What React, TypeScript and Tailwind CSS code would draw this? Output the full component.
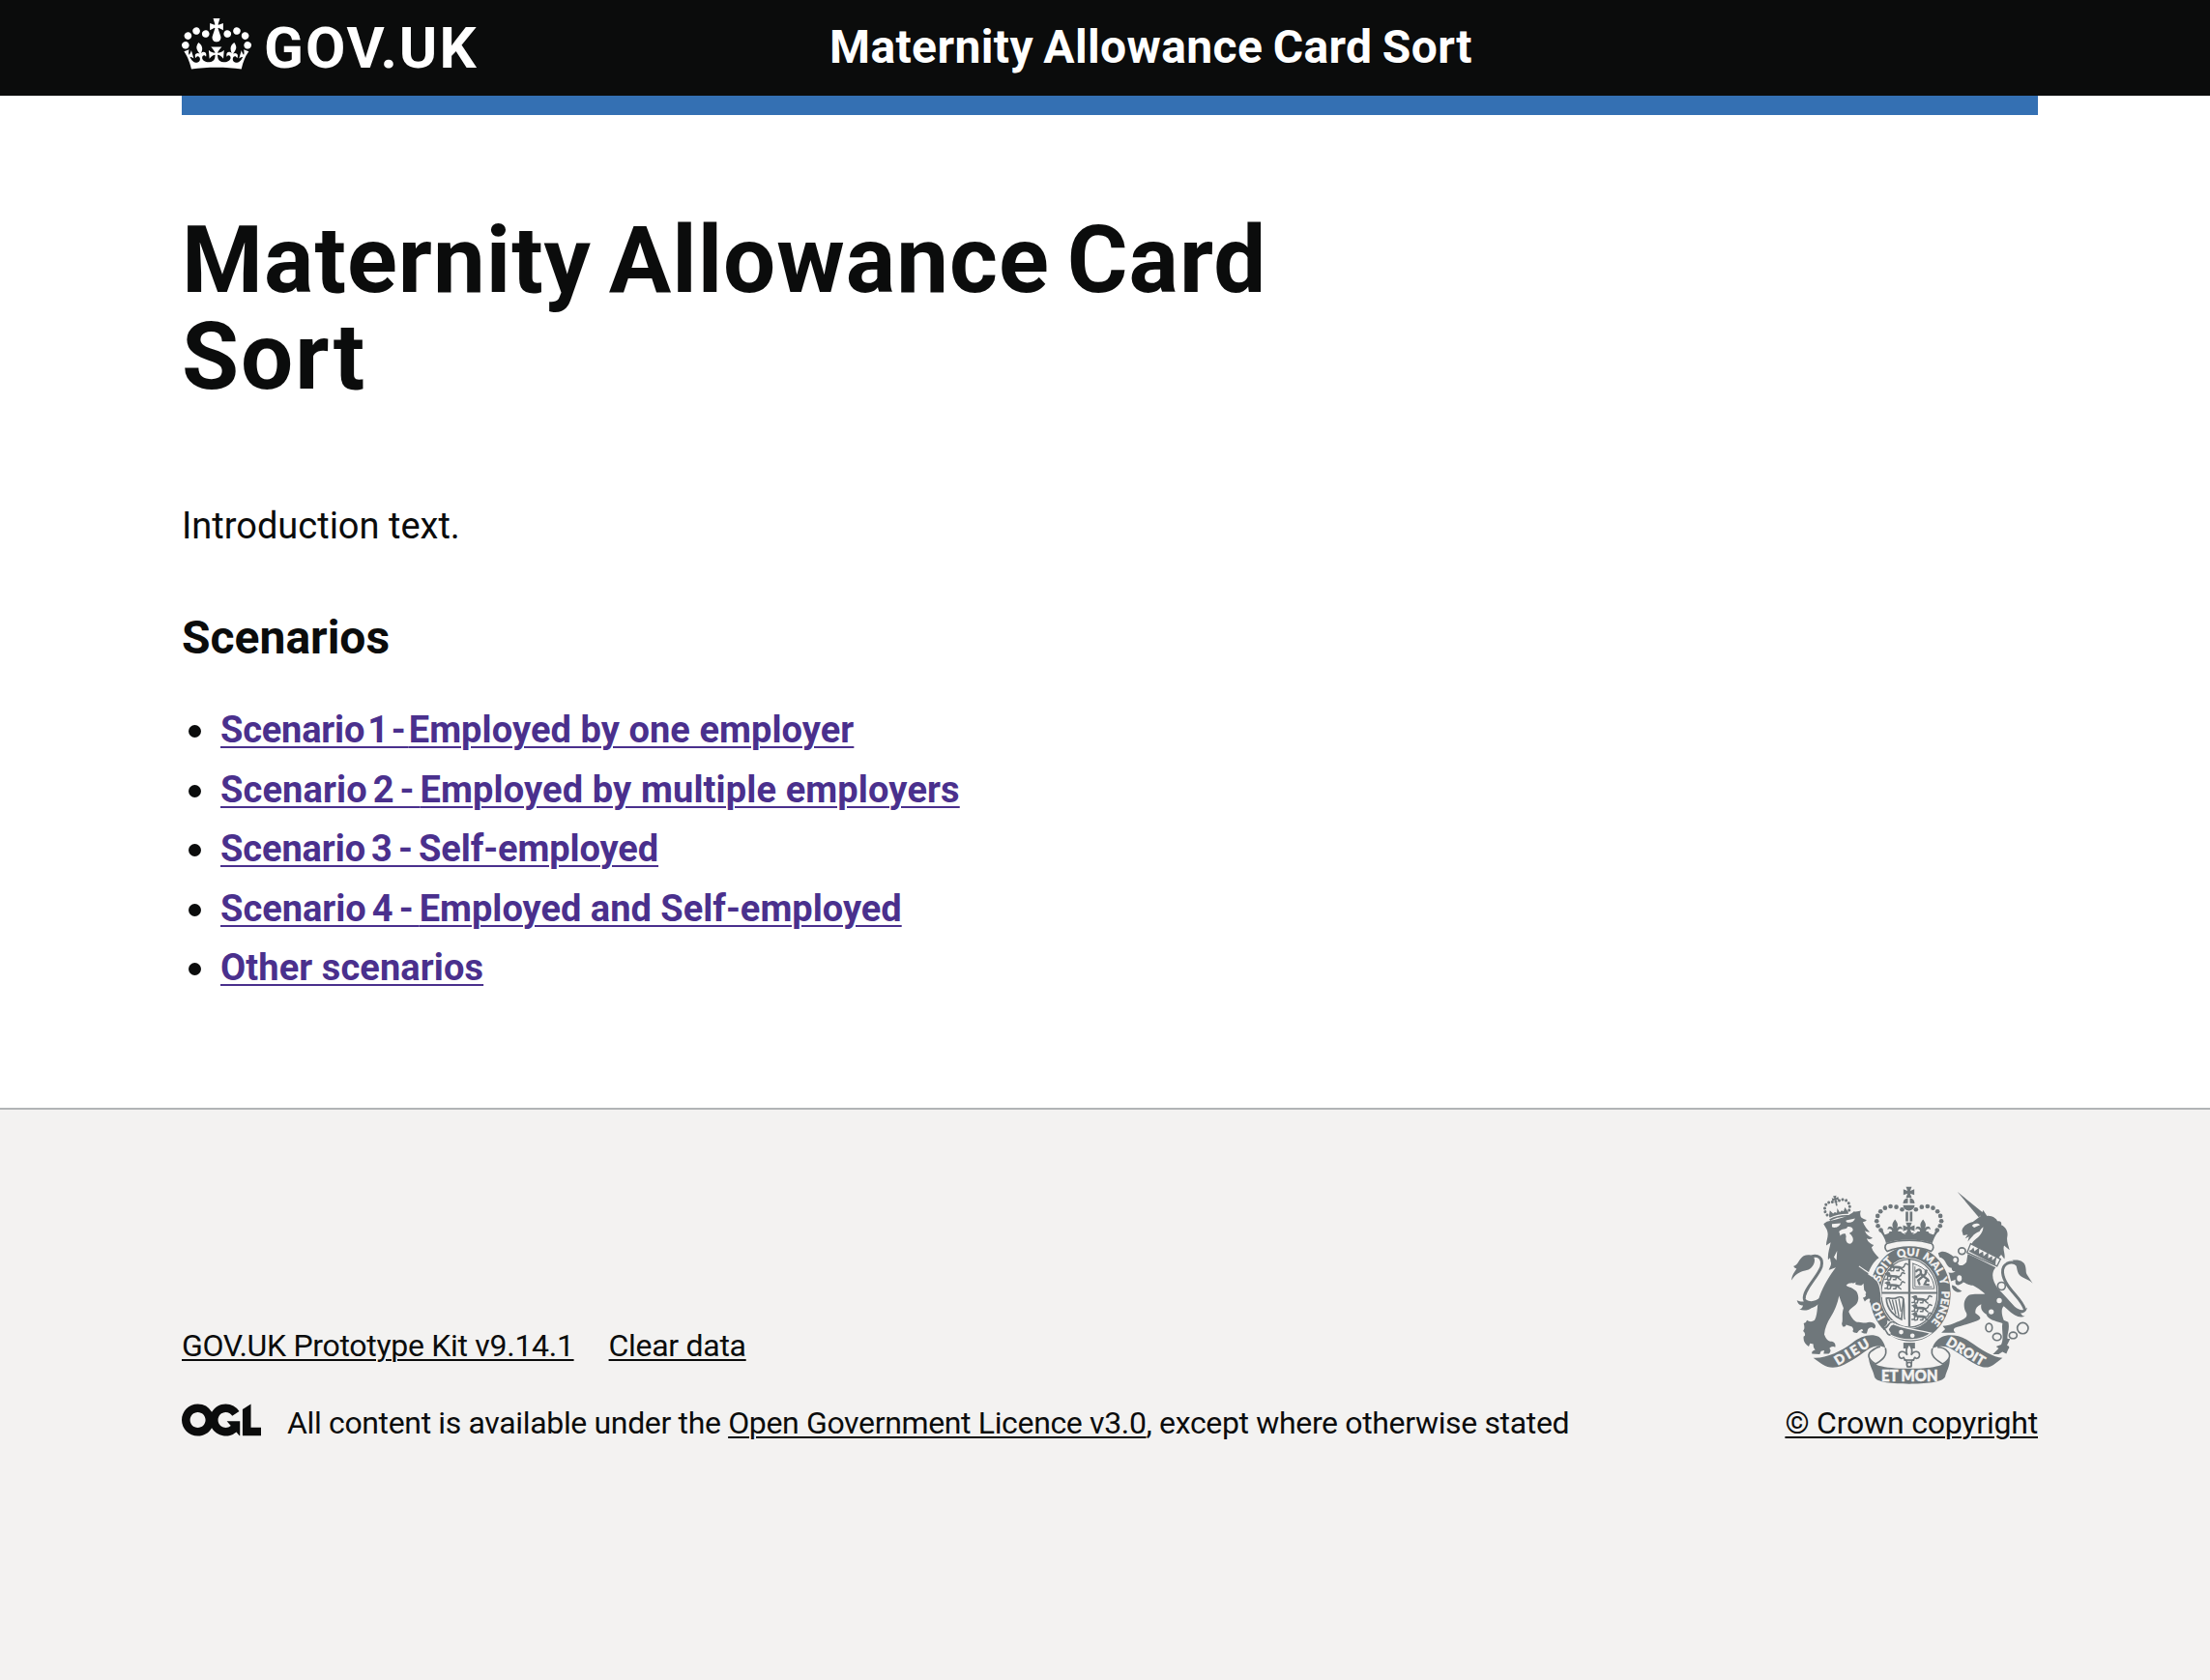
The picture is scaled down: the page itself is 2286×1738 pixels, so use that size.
import type { ReactNode } from "react";

const INK = "#6f777b";
const PAPER = "#f3f2f1";

function CrownLogo() {
  return (
    <svg viewBox="0 0 132 97" className="h-[53px] w-[72px]" fill="currentColor" fillRule="evenodd" aria-hidden="true">
      <path d="M25 30.2c3.5 1.5 7.7-.2 9.1-3.7 1.5-3.6-.2-7.8-3.9-9.2-3.6-1.4-7.6.3-9.1 3.9-1.4 3.5.3 7.5 3.9 9zM9 39.5c3.6 1.5 7.8-.2 9.2-3.7 1.5-3.6-.2-7.8-3.9-9.1-3.6-1.5-7.6.2-9.1 3.8-1.4 3.5.3 7.5 3.8 9zM4.4 57.2c3.5 1.5 7.7-.2 9.1-3.8 1.5-3.6-.2-7.7-3.9-9.1-3.5-1.5-7.6.3-9.1 3.8-1.4 3.5.3 7.6 3.9 9.1zm38.3-21.4c3.5 1.5 7.7-.2 9.1-3.8 1.5-3.6-.2-7.7-3.9-9.1-3.6-1.5-7.6.3-9.1 3.8-1.3 3.6.4 7.7 3.9 9.1zm64.4-5.6c-3.6 1.5-7.8-.2-9.1-3.7-1.5-3.6.2-7.8 3.8-9.2 3.6-1.4 7.7.3 9.2 3.9 1.3 3.5-.4 7.5-3.9 9zm15.9 9.3c-3.6 1.5-7.7-.2-9.1-3.7-1.5-3.6.2-7.8 3.7-9.1 3.6-1.5 7.7.2 9.2 3.8 1.5 3.5-.3 7.5-3.8 9zm4.7 17.7c-3.6 1.5-7.8-.2-9.2-3.8-1.5-3.6.2-7.7 3.9-9.1 3.6-1.5 7.7.3 9.2 3.8 1.3 3.5-.4 7.6-3.9 9.1zM89.3 35.8c-3.6 1.5-7.8-.2-9.2-3.8-1.4-3.6.2-7.7 3.9-9.1 3.6-1.5 7.7.3 9.2 3.8 1.4 3.6-.3 7.7-3.9 9.1zM69.7 17.7l8.9 4.7V9.3l-8.9 2.8c-.2-.3-.5-.6-.9-.9L72.4 0H59.6l3.5 11.2c-.3.3-.6.5-.9.9l-8.8-2.8v13.1l8.8-4.7c.3.3.6.7.9.9l-5 15.4v.1c-.2.8-.4 1.6-.4 2.4 0 4.1 3.1 7.5 7 8.1h.2c.3 0 .7.1 1 .1.4 0 .7 0 1-.1h.2c4-.6 7.1-4.1 7.1-8.1 0-.8-.1-1.7-.4-2.4V34l-5.1-15.4c.4-.2.7-.6 1-.9zM66 92.8c16.9 0 32.8 1.1 47.1 3.2 4-16.9 8.9-26.7 14-33.5l-9.6-3.4c1 4.9 1.1 7.2 0 10.2-1.5-1.4-3-4.3-4.2-8.7L108.6 76c2.8-2 5-3.2 7.5-3.3-4.4 9.4-10 11.9-13.6 11.2-4.3-.8-6.3-4.6-5.6-7.9 1-4.7 5.7-5.9 8-.5 4.3-8.7-3-11.4-7.6-8.8 7.1-7.2 7.9-13.5 2.1-21.1-8 6.1-8.1 12.3-4.5 20.8-4.7-5.4-12.1-2.5-9.5 6.2 3.4-5.2 7.9-2 7.2 3.1-.6 4.3-6.4 7.8-13.5 7.2-10.3-.9-10.9-8-11.2-13.8 2.5-.5 7.1 1.8 11 7.3L80.2 60c-4.1 4.4-8 5.3-12.3 5.4 1.4-4.4 8-11.6 8-11.6H55.5s6.4 7.2 7.9 11.6c-4.2-.1-8-1-12.3-5.4l1.4 16.4c3.9-5.5 8.5-7.7 10.9-7.3-.3 5.8-.9 12.8-11.1 13.8-7.2.6-12.9-2.9-13.5-7.2-.7-5 3.8-8.3 7.1-3.1 2.7-8.7-4.6-11.6-9.4-6.2 3.7-8.5 3.6-14.7-4.6-20.8-5.8 7.6-5 13.9 2.2 21.1-4.7-2.6-11.9.1-7.7 8.8 2.3-5.5 7.1-4.2 8.1.5.7 3.3-1.3 7.1-5.7 7.9-3.5.7-9-1.8-13.5-11.2 2.5.1 4.7 1.3 7.5 3.3l-4.7-15.4c-1.2 4.4-2.7 7.2-4.3 8.7-1.1-3-.9-5.3 0-10.2l-9.5 3.4c5 6.9 9.9 16.7 14 33.5 14.8-2.1 30.8-3.2 47.7-3.2z" />
    </svg>
  );
}

function OglLogo() {
  return (
    <svg viewBox="0 0 483.2 195.7" className="h-[34px] w-[82px]" fill="currentColor" role="img" aria-label="OGL">
      <path d="M421.5 142.8V.1l-50.7 32.3v161.1h112.4v-50.7zm-122.3-9.6A47.12 47.12 0 0 1 221 97.8c0-26 21.1-47.1 47.1-47.1 16.7 0 31.4 8.7 39.7 21.8l42.7-27.2A97.63 97.63 0 0 0 268.1 0c-36.5 0-68.3 20.1-85.1 49.7A98 98 0 0 0 97.8 0C43.9 0 0 43.9 0 97.8s43.9 97.8 97.8 97.8c36.5 0 68.3-20.1 85.1-49.7a97.76 97.76 0 0 0 149.6 25.4l19.4 22.2h3v-87.8h-80l24.3 27.5zM97.8 145c-26 0-47.1-21.1-47.1-47.1s21.1-47.1 47.1-47.1 47.1 21.1 47.1 47.1S123.8 145 97.8 145" />
    </svg>
  );
}

function Cross({ x, y, s = 1 }: { x: number; y: number; s?: number }) {
  return (
    <path
      transform={`translate(${x} ${y}) scale(${s})`}
      d="M-9-17H9L4-4 17-9V9L4 4 9 17H-9L-4 4-17 9V-9L-4-4z"
    />
  );
}

function Fleur({ x, y, s = 1 }: { x: number; y: number; s?: number }) {
  return (
    <path
      transform={`translate(${x} ${y}) scale(${s})`}
      d="M0-26C10-14 10-6 5 2 12-8 24-6 23 6 19 1 12 2 9 9L14 18H-14L-9 9C-12 2-19 1-23 6-24-6-12-8-5 2-10-6-10-14 0-26z"
    />
  );
}

/* A walking lion, used three to a quarter on the shield. */
function PassantLion({ x, y }: { x: number; y: number }) {
  return (
    <g transform={`translate(${x} ${y})`} fill="none" stroke={INK} strokeWidth="4.5" strokeLinecap="round">
      <path d="M12-3C20 1 30-3 42 2" strokeWidth="8" />
      <path d="M2-8L14-9M10-2L8 8 1 9M20 0L17 10 10 11M36 2L34 10 27 10M43 6L50 11M46 0C56-4 48-10 56-12L62-9" />
      <circle cx="11" cy="-7" r="4.5" fill={INK} />
    </g>
  );
}

const beads = [
  [440, 124], [422, 116], [404, 114], [387, 119], [373, 130], [364, 144], [361, 160], [365, 175], [374, 188],
];

const smallBeads = [
  [203, 134], [199, 123], [200, 112], [206, 102], [216, 97], [227, 98],
  [273, 134], [277, 123], [276, 112], [270, 102], [260, 97], [249, 98],
];

function RoyalArms() {
  return (
    <svg viewBox="90 48 760 622" className="h-[207px] w-[253px]" fill={INK} aria-hidden="true">
      {/* lion */}
      <path d="M190 404C166 424 140 424 136 402C132 374 178 334 189 302C196 274 178 264 158 270" fill="none" stroke={INK} strokeWidth="9" />
      <path d="M96 344C98 326 106 318 112 308C104 306 103 302 103 300C116 298 120 276 134 268C150 262 170 266 168 284C166 300 154 312 138 314C120 318 108 326 96 344z" />
      <path d="M188 396C172 408 156 414 142 404C138 412 126 412 113 406C116 418 124 422 132 422C130 430 126 434 120 434C136 440 150 436 158 430C170 428 184 416 190 404z" />
      <path d="M196 169C206 160 214 160 222 158C250 152 280 142 290 130C300 132 306 128 312 128C308 136 310 142 312 148C320 154 326 156 330 156C326 162 320 162 318 162C324 178 334 188 340 194C332 194 328 192 324 190C328 202 338 208 348 212C342 218 336 216 330 214C334 226 344 232 352 234L345 242C350 256 358 264 368 274C350 286 340 306 334 326C342 334 364 344 368 364L372 396L366 404C362 398 356 398 354 404L350 413L336 413L342 402C334 400 328 404 324 410L318 398C328 396 330 390 324 386C318 378 318 368 318 360C306 360 292 358 284 352C276 352 270 354 266 360C272 366 284 366 294 372C306 388 308 406 296 420C284 430 276 434 274 442C280 456 290 472 300 474C312 472 318 478 328 476C340 472 352 474 357 484C358 490 356 494 352 494L346 490L338 492L334 496L330 509C322 510 316 508 312 504C320 502 320 498 314 496L306 500L300 508C292 508 288 506 286 502C290 498 288 492 284 488L266 482C264 488 262 488 256 488C252 482 252 478 254 474C256 460 252 448 258 430C252 416 248 404 244 392C240 414 230 440 218 458C208 474 200 492 198 512C204 528 212 534 222 534C232 538 234 544 232 552C226 548 218 550 214 556C220 560 218 568 212 572L196 572L198 562L188 564L184 574L160 572C158 566 162 562 170 560C164 554 164 548 164 542L154 540L150 550C138 542 132 534 134 518C140 518 140 508 132 502C136 496 138 492 134 478C140 476 142 474 144 468C152 474 160 474 168 468C180 446 174 414 184 392C196 360 216 326 234 304C226 306 216 312 212 312C216 302 222 296 218 286L216 274L210 280C208 262 214 246 218 226C212 230 206 234 204 236C204 216 214 206 206 186z" />
      <g fill={PAPER}>
        <path d="M222 169L249 167C246 178 230 184 222 178zM266 158L294 152C290 164 276 168 266 162zM244 192C254 182 270 186 270 178C278 176 288 180 287 188C286 194 280 194 276 198C288 206 292 220 282 229C272 234 262 224 266 208L264 200C258 198 252 200 248 206z" />
        <path d="M268 360C276 352 288 356 296 350C292 360 300 362 310 364L320 354L322 374L330 384L322 390C306 388 292 370 268 360zM228 272L238 252 236 282z" />
      </g>
      {/* lion's crown */}
      <g transform="rotate(-12 238 118)">
        <path d="M206 149C224 143 248 143 270 149L267 154C248 148 224 148 209 154zM208 138L214 122 222 134 228 130 234 134 238 120 243 134 250 130 255 134 262 122 269 138 268 144C248 139 228 139 209 144z" />
        {smallBeads.map(([x, y]) => (
          <circle key={`${x}-${y}`} cx={x} cy={y} r="4.5" />
        ))}
        <path d="M235.500 98V112H240.500V98z" />
        <Cross x={238} y={91} s={0.6} />
      </g>

      {/* unicorn */}
      <path d="M612 69L694 136 678 148z" />
      <path d="M626 190C628 176 642 166 660 162L684 144 692 126 704 144C718 142 734 152 736 160C748 158 750 166 748 172C762 178 770 192 767 208C764 222 770 234 774 250L757 236C752 250 762 262 758 278L748 264L738 276L656 234C658 218 676 216 684 198L680 192C670 196 664 200 658 208L644 224L648 208L636 214L644 202L630 204z" />
      <path d="M657 174C664 166 676 166 682 172L664 180zM692 178C692 192 684 206 668 214C680 200 676 192 692 178z" fill={PAPER} />
      <path d="M644 262C676 276 706 292 731 304C714 322 722 348 738 370C756 388 774 408 790 426C806 440 822 438 829 428C826 442 818 446 808 446C812 452 816 456 822 456C802 462 788 452 778 444C772 438 762 430 756 424C748 430 748 448 756 468L770 474C776 496 764 514 768 526L776 526 766 546C772 548 776 552 770 558L764 572L752 566L740 574L722 574L740 556 732 550 748 544C758 522 748 496 752 478C728 470 706 466 702 450C686 440 684 430 686 418C672 424 666 434 668 446C684 456 690 464 672 470C646 480 622 486 604 492C598 496 600 502 606 507L562 507 574 496 566 486C590 486 604 476 616 472C636 464 644 458 640 446C630 430 628 404 648 390C664 384 682 388 698 386C686 376 672 366 660 360C642 358 638 352 630 350C620 360 602 366 606 342C596 346 586 348 586 356C598 360 608 362 610 368L626 378C616 384 608 380 600 374L596 368C584 370 578 358 580 340L558 334 552 320C566 312 590 328 606 316C598 318 594 314 594 306C574 304 580 278 556 272L552 260C566 248 584 256 602 272L616 296C626 300 632 296 640 288z" />
      <path d="M822 436C812 404 782 384 766 356C752 334 744 304 766 292C780 286 792 290 798 296" fill="none" stroke={INK} strokeWidth="9" />
      <path d="M782 282C804 278 822 286 824 304C826 314 824 320 828 326L846 354C832 338 812 340 802 324C794 308 800 296 782 282z" />
      <path d="M653 230L746 278 735 300 642 258z" fill={PAPER} stroke={INK} strokeWidth="4" />
      <path
        transform="translate(695 265) rotate(27)"
        d="M-46 6H44V12H-46zM-44 8L-40-6-32 4-24-14-16 4-8-8 0 4 8-14 16 4 24-8 30 4 37-14 43 8z"
      />
      <g fill={PAPER} stroke={INK} strokeWidth="5">
        <ellipse cx="626" cy="253" rx="11" ry="10" />
        <ellipse cx="605" cy="281" rx="9" ry="10" />
        <ellipse cx="618" cy="338" rx="10" ry="12" />
        <circle cx="749" cy="362" r="12" />
        <ellipse cx="710" cy="491" rx="10" ry="13" />
        <ellipse cx="735" cy="520" rx="13" ry="11" />
        <ellipse cx="785" cy="515" rx="12" ry="10" />
        <circle cx="815" cy="493" r="17" />
      </g>
      <circle cx="742" cy="407" r="8" fill={PAPER} />
      <circle cx="717" cy="442" r="8" fill={PAPER} />

      {/* garter and shield */}
      <ellipse cx="465" cy="386" rx="132" ry="154" fill={PAPER} />
      <ellipse cx="465" cy="386" rx="126" ry="148" />
      <ellipse cx="462" cy="384" rx="91" ry="110" fill={PAPER} />
      <ellipse cx="462" cy="384" rx="87" ry="106" fill="none" stroke={INK} strokeWidth="4" />
      <path d="M459 278H466V488H459zM374 380H550V386H374z" />
      {[304, 332, 360].map((y) => <PassantLion key={y} x={y === 304 ? 396 : 386} y={y} />)}
      {[404, 431, 457].map((y) => <PassantLion key={y} x={470} y={y} />)}
      <g fill="none" stroke={INK} strokeLinecap="round">
        <path d="M474 292V370H540C538 336 516 304 474 292zM480 302V364H532" strokeWidth="3" />
        <path d="M484 316C494 306 500 312 498 322C504 336 518 334 522 346M498 324L484 334M502 334L490 344 494 356M516 344L510 356 522 358M508 328C520 324 508 312 516 314" strokeWidth="7" />
        <path d="M391 400C404 396 414 406 424 398C432 394 442 396 444 402L438 466C420 458 392 436 391 400z" strokeWidth="5" />
        <path d="M400 404L410 434M410 406L420 448M420 406L430 456M430 402L436 440" strokeWidth="4" />
        <path d="M444 402C450 430 444 452 448 464" strokeWidth="4" />
      </g>
      <defs>
        <path id="garter" d="M465 504A98 118 0 0 1 465 268A98 118 0 0 1 465 504" />
      </defs>
      <g fill={PAPER} stroke={PAPER} strokeWidth="1" fontFamily="Lato, sans-serif" fontWeight="900" fontSize="34" textAnchor="middle">
        <text><textPath href="#garter" startOffset="17.5%">HO</textPath></text>
        <text><textPath href="#garter" startOffset="36%">SOIT</textPath></text>
        <text><textPath href="#garter" startOffset="49%">QUI</textPath></text>
        <text><textPath href="#garter" startOffset="61%">MAL</textPath></text>
        <text><textPath href="#garter" startOffset="69.5%">Y</textPath></text>
        <text><textPath href="#garter" startOffset="81.5%">PENSE</textPath></text>
      </g>
      {/* forepaw over the garter */}
      <path d="M328 324C346 330 366 348 370 368L374 394 366 406 358 398 350 414 338 412 342 402 328 400z" />
      <path d="M306 300C328 318 366 330 372 370L376 396" fill="none" stroke={PAPER} strokeWidth="3.5" />
      {/* belt and buckle */}
      <path d="M396 472C430 492 476 496 530 508C500 534 440 536 396 510z" stroke={PAPER} strokeWidth="4" />
      <path d="M412 476C394 474 402 494 386 494C396 496 392 512 404 512" fill="none" stroke={PAPER} strokeWidth="14" />
      <path d="M416 474C394 468 402 492 382 494C396 498 388 514 404 514" fill="none" stroke={INK} strokeWidth="5" />
      <circle cx="437" cy="505" r="7" fill={PAPER} />
      <circle cx="472" cy="516" r="7" fill={PAPER} />

      {/* crown */}
      <Cross x={461} y={70} />
      <path d="M443 105A18 18 0 0 1 458 88V104zM464 88A18 18 0 0 1 479 105L464 104zM443 110H479A18 18 0 0 1 443 110z" />
      {beads.map(([x, y]) => (
        <g key={`${x}-${y}`}>
          <circle cx={x} cy={y} r="7" />
          <circle cx={923 - x} cy={y} r="7" />
        </g>
      ))}
      <path d="M451 131H459V161H451zM464 131H472V161H464z" />
      <path d="M370 191L380 189 386 202C398 200 402 194 400 192L436 192C440 198 446 200 452 200L446 196H478L472 200C478 200 484 198 488 192H522C520 194 526 200 538 202L544 189 554 191C540 208 538 218 534 228C490 214 430 214 390 228C386 214 382 206 370 191z" />
      <Fleur x={418} y={181} />
      <Fleur x={505} y={181} />
      <Cross x={461} y={182} s={1.05} />
      <path d="M392 230C430 216 494 216 532 230C540 236 538 248 530 254C490 236 434 236 394 254C386 248 384 236 392 230z" fill={PAPER} stroke={INK} strokeWidth="5" />

      {/* pendant */}
      <path d="M444 538H480V556H444z" />
      <g fill={PAPER} stroke={INK} strokeWidth="5">
        <path d="M462 542C474 556 472 566 468 576C478 560 496 564 494 578C492 590 480 588 480 582C478 590 474 592 470 594L468 612H456L454 594C450 592 446 590 444 582C444 588 432 590 430 578C428 564 446 560 456 576C452 566 450 556 462 542z" />
        <path d="M446 592H478" />
        <circle cx="462" cy="606" r="7" />
      </g>

      {/* motto ribbons */}
      <path d="M164 585C200 588 250 566 286 538C312 516 346 508 368 520C378 528 386 542 388 554C370 544 350 548 332 560C304 580 268 606 238 614C206 620 190 604 164 585z" />
      <path d="M752 585C724 584 690 562 646 532C620 514 584 510 564 520C546 530 538 542 534 556C554 546 574 548 590 556C620 570 652 602 690 614C720 618 728 602 752 585z" />
      <g fill="none" stroke={INK} strokeWidth="5">
        <path d="M388 554C396 580 376 592 358 604C338 594 330 578 342 566C352 558 360 552 372 550" />
        <path d="M534 556C526 580 548 592 566 604C586 594 594 578 582 566C576 558 566 552 550 552" />
      </g>
      <path d="M336 584C344 606 376 618 462 618C548 618 580 606 588 584C590 612 576 628 574 644C566 662 510 666 462 666C414 666 358 662 354 644C352 626 338 610 336 584z" />
      <g fill={PAPER} stroke={PAPER} strokeWidth="1.5" fontFamily="Lato, sans-serif" fontWeight="900" textAnchor="middle">
        <text x="463" y="657" fontSize="49" textLength="176" lengthAdjust="spacingAndGlyphs">ET MON</text>
        <text transform="translate(291 579) rotate(-31)" fontSize="41" textLength="118">DIEU</text>
        <text transform="translate(631 577) rotate(31)" fontSize="41" textLength="132">DROIT</text>
      </g>
    </svg>
  );
}

function FooterLink({ children }: { children: ReactNode }) {
  return (
    <a href="#" className="underline decoration-2 underline-offset-[3px]">
      {children}
    </a>
  );
}

const scenarios = [
  { start: "Scenario 1 - ", spacing: "[word-spacing:-6.2px] tracking-[-0.2px]", end: "Employed by one employer", tracking: "tracking-[0.07px]" },
  { start: "Scenario 2 - ", spacing: "[word-spacing:-3.7px]", end: "Employed by multiple employers", tracking: "tracking-[0.13px]" },
  { start: "Scenario 3 - ", spacing: "[word-spacing:-3.2px]", end: "Self-employed", tracking: "tracking-[-0.1px]" },
  { start: "Scenario 4 - ", spacing: "[word-spacing:-3.4px]", end: "Employed and Self-employed", tracking: "tracking-[0px]" },
];

const linkClass =
  "text-[38px] leading-[50px] font-bold text-[#4a308d] underline decoration-2 underline-offset-[4px]";

function Bullet() {
  return <span className="mt-[20px] mr-[20px] ml-[7px] size-[13px] rounded-full bg-[#0b0c0c]" />;
}

export default function App() {
  return (
    <div className="flex h-[1738px] flex-col overflow-hidden bg-white font-['Roboto',sans-serif] text-[#0b0c0c]">
      <header className="h-[99px] bg-[#0b0c0c] pr-[178px] pl-[188px] text-white">
        <div className="flex">
          <a href="#" className="flex w-[670px] pt-[19px]">
            <CrownLogo />
            <span className="mt-px ml-[13px] text-[60px] leading-[60px] font-bold tracking-[2px]">GOV.UK</span>
          </a>
          <a href="#" className="pt-[19px] text-[48px] leading-[60px] font-bold tracking-[0.39px] [word-spacing:-2px]">
            Maternity Allowance Card Sort
          </a>
        </div>
      </header>
      <div className="ml-[188px] h-[20px] w-[1920px] bg-[#3470b3]" />

      <main className="h-[1027px] pr-[178px] pl-[188px] pt-[100px]">
        <h1 className="w-[1240px] text-[96px] leading-[100px] font-bold tracking-[1px] [word-spacing:-7px]">
          Maternity Allowance Card <span className="tracking-[2px]">Sort</span>
        </h1>
        <p className="mt-[100px] text-[38px] leading-[50px]">Introduction text.</p>
        <h2 className="mt-[61px] text-[48px] leading-[60px] font-bold">Scenarios</h2>
        <ul className="mt-[40px]">
          {scenarios.map(({ start, spacing, end, tracking }) => (
            <li key={start} className="flex h-[61.5px] items-start">
              <Bullet />
              <a href="#" className={`${linkClass} ${tracking}`}>
                <span className={spacing}>{start}</span>
                {end}
              </a>
            </li>
          ))}
          <li className="flex h-[61.5px] items-start">
            <Bullet />
            <a href="#" className={`${linkClass} tracking-[0.1px]`}>
              Other scenarios
            </a>
          </li>
        </ul>
      </main>

      <footer className="flex flex-1 items-start justify-between border-t-2 border-[#b1b4b6] bg-[#f3f2f1] pr-[178px] pl-[188px] text-[32px] leading-[40px]">
        <div className="pt-[224px]">
          <div className="flex gap-[36px] tracking-[-0.3px]">
            <FooterLink>GOV.UK Prototype Kit v9.14.1</FooterLink>
            <FooterLink>Clear data</FooterLink>
          </div>
          <div className="mt-[40px] flex">
            <OglLogo />
            <p className="ml-[27px] tracking-[-0.35px]">
              All content is available under the <FooterLink>Open Government Licence v3.0</FooterLink>, except where otherwise
              stated
            </p>
          </div>
        </div>
        <div className="flex flex-col items-center pt-[78px]">
          <RoyalArms />
          <span className="mt-[19px] tracking-[-0.2px]">
            <FooterLink>© Crown copyright</FooterLink>
          </span>
        </div>
      </footer>
    </div>
  );
}
